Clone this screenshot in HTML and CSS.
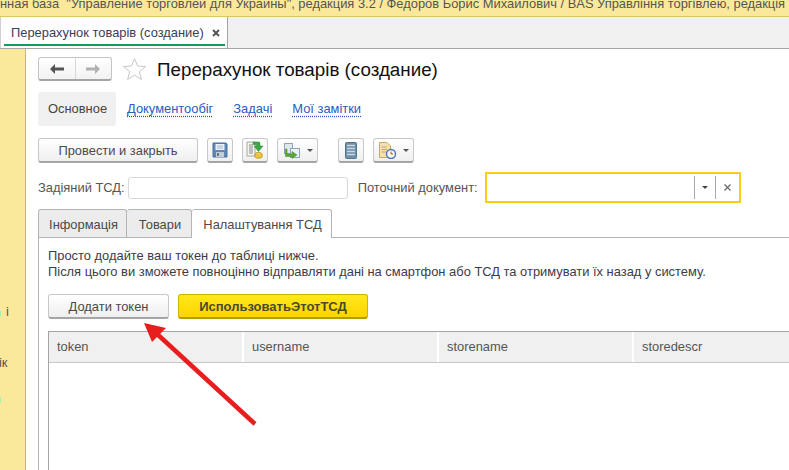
FILE: index.html
```html
<!DOCTYPE html>
<html lang="en">
<head>
  <meta charset="UTF-8" />
  <title>Перерахунок товарів (создание)</title>
  <link rel="stylesheet" href="styles.css">
</head>
<body>
  <div class="title-bar">нная база  "Управление торговлей для Украины", редакция 3.2 / Федоров Борис Михайлович / BAS Управління торгівлею, редакція 3.2</div>

  <div class="tab-bar">
    <div class="doc-tab">
      <span>Перерахунок товарів (создание)</span>
      <svg class="doc-tab-close" width="8" height="8" viewBox="0 0 8 8"><path d="M1 1 L7 7 M7 1 L1 7" stroke="#555" stroke-width="2"/></svg>
    </div>
  </div>

  <div class="main">
    <aside class="side">
      <div class="side-text side-text-1">і</div>
      <div class="side-text side-text-2">ік</div>
      <div class="side-mark side-mark-1"></div>
      <div class="side-mark side-mark-2"></div>
    </aside>

    <div class="content">
      <div class="head-row">
        <div class="nav-btns">
          <button class="nav-btn">
            <svg width="14" height="10" viewBox="0 0 14 10"><path d="M0 5 L5 0 V3.5 H14 V6.500 H5 V10 Z" fill="#555"/></svg>
          </button>
          <button class="nav-btn">
            <svg width="14" height="10" viewBox="0 0 14 10"><path d="M14 5 L9 0 V3.5 H0 V6.500 H9 V10 Z" fill="#b0b0b0"/></svg>
          </button>
        </div>
        <svg class="star" width="25" height="24" viewBox="0 0 25 24"><path d="M12.500 1.500 L15.500 9 L23.500 9.500 L17.300 14.600 L19.400 22.500 L12.500 18 L5.600 22.500 L7.700 14.600 L1.500 9.500 L9.500 9 Z" fill="#fff" stroke="#c8c8c8"/></svg>
        <h1 class="page-title">Перерахунок товарів (создание)</h1>
      </div>

      <div class="sections">
        <span class="section section-on">Основное</span>
        <a class="section" href="#">Документообіг</a>
        <a class="section" href="#">Задачі</a>
        <a class="section" href="#">Мої замітки</a>
      </div>

      <div class="toolbar">
        <button class="btn btn-post">Провести и закрыть</button>
        <button class="btn btn-icon">
          <svg width="16" height="16" viewBox="0 0 16 16">
            <path d="M1 1 H14 L15 2 V15 H1 Z" fill="#5d87b5" stroke="#47709c"/>
            <rect x="3.500" y="2" width="9" height="6" fill="#eef3f8"/>
            <path d="M5 4 H11 M5 6 H11" stroke="#9db6cf"/>
            <rect x="4" y="10" width="8" height="5" fill="#c4ccd4"/>
            <rect x="5" y="11" width="2" height="3" fill="#66788c"/>
          </svg>
        </button>
        <button class="btn btn-icon">
          <svg width="18" height="18" viewBox="0 0 18 18">
            <path d="M1 1 H9 V15 H1 Z" fill="#f4f4f0" stroke="#a8a8a0"/>
            <path d="M3 4 H7 M3 6 H7 M3 8 H7 M3 10 H7 M3 12 H7" stroke="#8a8a88"/>
            <ellipse cx="12.500" cy="13" rx="3.500" ry="1.500" fill="#f5d66a" stroke="#c09a28"/>
            <path d="M9 13 V16 C9 17.500 16 17.500 16 16 V13" fill="#f0c53e" stroke="#c09a28"/>
            <path d="M7 1 H13 Q14 1 14 2 V5 H17 L12.500 10.500 L8 5 H10.500 V3.500 H7 Z" fill="#3aa845" stroke="#2a8a36" stroke-width=".5"/>
          </svg>
        </button>
        <button class="btn btn-icon btn-drop">
          <svg width="18" height="17" viewBox="0 0 18 17">
            <rect x="1.500" y="1.500" width="8" height="10" fill="#dfe8f0" stroke="#8ea4b8"/>
            <rect x="7.500" y="6.500" width="9" height="9" fill="#eaf1f7" stroke="#8ea4b8"/>
            <path d="M4 7 V12 H9 V9.500 L14 13 L9 16.500 V14.500 H2.500 V7 Z" fill="#5aa832" stroke="#3f8a22" stroke-width=".5"/>
          </svg>
          <span class="caret"></span>
        </button>
        <button class="btn btn-icon btn-gap">
          <svg width="12" height="17" viewBox="0 0 12 17">
            <rect x=".5" y=".5" width="11" height="16" rx="1" fill="#6d8fa8" stroke="#56748a"/>
            <path d="M2 3.500 H10 M2 6.500 H10 M2 9.500 H10 M2 12.500 H10" stroke="#c9d8e3" stroke-width="1.500"/>
          </svg>
        </button>
        <button class="btn btn-icon btn-drop">
          <svg width="19" height="18" viewBox="0 0 19 18">
            <path d="M1.500 1.500 H9 L12.500 5 V16.500 H1.500 Z" fill="#f5e2a8" stroke="#c8a95c"/>
            <path d="M3.500 6 H9 M3.500 8.500 H9 M3.500 11 H8" stroke="#c4a866"/>
            <circle cx="13" cy="13" r="4.500" fill="#f7f7fa" stroke="#4a78b5" stroke-width="1.500"/>
            <path d="M13 10.500 V13 H15" stroke="#c8413a" fill="none"/>
          </svg>
          <span class="caret"></span>
        </button>
      </div>

      <div class="fields">
        <label class="field-label">Задіяний ТСД:</label>
        <div class="input input-tsd"></div>
        <label class="field-label field-label-doc">Поточний документ:</label>
        <div class="input-doc">
          <div class="input-doc-text"></div>
          <div class="input-doc-btn"><span class="caret caret-dark"></span></div>
          <div class="input-doc-btn input-doc-clear">
            <svg width="7" height="7" viewBox="0 0 7 7"><path d="M.5 .5 L6.500 6.500 M6.500 .5 L.5 6.500" stroke="#666" stroke-width="1.200"/></svg>
          </div>
        </div>
      </div>

      <div class="tabs">
        <div class="tab tab-info">Інформація</div>
        <div class="tab tab-goods">Товари</div>
        <div class="tab tab-on">Налаштування ТСД</div>
      </div>

      <div class="tab-body">
        <p class="hint">Просто додайте ваш токен до таблиці нижче.<br>Після цього ви зможете повноцінно відправляти дані на смартфон або ТСД та отримувати їх назад у систему.</p>

        <div class="actions">
          <button class="btn btn-token">Додати токен</button>
          <button class="btn btn-yellow">ИспользоватьЭтотТСД</button>
        </div>

        <div class="grid">
          <div class="grid-head">
            <div class="grid-col">token</div>
            <div class="grid-col">username</div>
            <div class="grid-col">storename</div>
            <div class="grid-col grid-col-last">storedescr</div>
          </div>
        </div>
      </div>
    </div>
  </div>

  <svg class="arrow" width="120" height="112" viewBox="0 0 120 112">
    <path d="M115 106 L16 15" stroke="#e81e1e" stroke-width="4.500" fill="none"/>
    <path d="M4 5 L26 10 L12 24 Z" fill="#e81e1e"/>
  </svg>
</body>
</html>
```

FILE: styles.css
```css
body {
  margin: 0;
  height: 470px;
  overflow: hidden;
  position: relative;
  display: flex;
  flex-direction: column;
  font-family: "Liberation Sans", Arial, sans-serif;
  font-size: 12.9px;
  color: #4a4a4a;
  background: #fff;
}
button {
  font-family: inherit;
}
.title-bar {
  flex: none;
  height: 16px;
  line-height: 7px;
  background: #fbe99b;
  border-bottom: 1px solid #d9c667;
  color: #555;
  white-space: pre;
  overflow: hidden;
}
.tab-bar {
  flex: none;
  height: 32px;
  box-sizing: border-box;
  background: #f0f0f0;
  border-bottom: 1px solid #a5a5a5;
}
.doc-tab {
  width: 228px;
  height: 31px;
  box-sizing: border-box;
  background: #fff;
  border-right: 1px solid #a5a5a5;
  border-left: 1px solid #d0d0d0;
  padding: 8px 0 0 10px;
  color: #3c3c5a;
  display: flex;
  gap: 8px;
  position: relative;
}
.doc-tab::after {
  content: "";
  position: absolute;
  left: 3px;
  right: 2px;
  bottom: 2px;
  height: 2px;
  background: #0e9d58;
}
.doc-tab-close {
  margin-top: 4px;
}
.main {
  flex: 1;
  min-height: 0;
  display: flex;
}
.side {
  width: 25px;
  flex: none;
  background: #fbe99b;
  border-right: 1px solid #c9b764;
  position: relative;
  overflow: hidden;
}
.side-text {
  position: absolute;
  color: #555;
}
.side-text-1 {
  top: 255px;
  left: 6px;
}
.side-text-2 {
  top: 306px;
  left: -1px;
}
.side-mark {
  position: absolute;
  left: 0;
  width: 1px;
  height: 6px;
  background: #aef0a8;
}
.side-mark-1 {
  top: 262px;
}
.side-mark-2 {
  top: 348px;
}
.content {
  flex: 1;
  display: flex;
  flex-direction: column;
  padding: 8px 0 0 12px;
  min-width: 0;
}
.head-row {
  flex: none;
  display: flex;
  align-items: center;
  height: 24px;
}
.nav-btns {
  display: flex;
  width: 74px;
  height: 24px;
  box-sizing: border-box;
  border: 1px solid #c4c4c4;
  border-bottom: 2px solid #a5a5a5;
  border-radius: 3px;
  background: linear-gradient(#fff, #f2f2f2);
}
.nav-btn {
  flex: 1;
  border: 0;
  background: none;
  padding: 0;
  display: flex;
  align-items: center;
  justify-content: center;
}
.nav-btn + .nav-btn {
  border-left: 1px solid #d8d8d8;
}
.star {
  margin-left: 10px;
}
.page-title {
  margin: 2px 0 0 10px;
  font-size: 18.8px;
  font-weight: normal;
  color: #111;
}
.sections {
  flex: none;
  display: flex;
  margin-top: 11px;
  height: 34px;
}
.section {
  color: #2a5bbf;
  padding: 0 10px;
  line-height: 34px;
  text-decoration: underline dotted #2a5bbf;
  text-underline-offset: 3px;
}
.section-on {
  width: 78px;
  box-sizing: border-box;
  background: #f0f0f0;
  color: #444;
  border-radius: 3px;
  margin-right: 1px;
  white-space: nowrap;
  text-decoration: none;
}
.toolbar {
  flex: none;
  display: flex;
  margin-top: 12px;
  gap: 9px;
}
.btn {
  height: 25px;
  box-sizing: border-box;
  border: 1px solid #c8c8c8;
  border-bottom: 2px solid #a5a5a5;
  border-radius: 3px;
  background: linear-gradient(#fff, #efefef);
  font-size: 12.9px;
  color: #4a4a4a;
  padding: 0;
  display: flex;
  align-items: center;
  justify-content: center;
}
.btn-post {
  width: 160px;
}
.btn-icon {
  width: 26px;
}
.btn-drop {
  width: 41px;
  gap: 6px;
}
.btn-gap {
  margin-left: 11px;
}
.caret {
  width: 0;
  height: 0;
  border-left: 3px solid transparent;
  border-right: 3px solid transparent;
  border-top: 3px solid #555;
}
.fields {
  flex: none;
  display: flex;
  align-items: center;
  margin-top: 9px;
  height: 31px;
}
.field-label {
  color: #555;
  white-space: nowrap;
}
.input {
  box-sizing: border-box;
  height: 22px;
  border: 1px solid #d8d8d8;
  border-radius: 3px;
}
.input-tsd {
  width: 220px;
  margin-left: 3px;
}
.field-label-doc {
  margin-left: 10px;
}
.input-doc {
  width: 256px;
  height: 31px;
  box-sizing: border-box;
  border: 2px solid #fbcb17;
  margin-left: 7px;
  display: flex;
  padding: 2px 0;
}
.input-doc-text {
  flex: 1;
}
.input-doc-btn {
  width: 20px;
  border-left: 1px solid #aaa;
  display: flex;
  align-items: center;
  justify-content: center;
}
.input-doc-clear {
  width: 23px;
}
.caret-dark {
  border-top-color: #444;
}
.tabs {
  flex: none;
  display: flex;
  margin-top: 6px;
  height: 28px;
}
.tab {
  box-sizing: border-box;
  height: 28px;
  padding: 7px 0 0 2px;
  text-align: center;
  background: #ececec;
  border: 1px solid #b4b4b4;
  border-bottom: 0;
  border-radius: 3px 3px 0 0;
  white-space: nowrap;
}
.tab + .tab {
  border-left: 0;
}
.tab-info {
  width: 89px;
}
.tab-goods {
  width: 65px;
}
.tab-on {
  width: 140px;
  background: #fff;
  position: relative;
  z-index: 1;
  height: 29px;
}
.tab-body {
  flex: 1;
  min-height: 0;
  display: flex;
  flex-direction: column;
  border-top: 1px solid #b4b4b4;
  border-left: 1px solid #b4b4b4;
  padding: 10px 0 0 9px;
}
.hint {
  margin: 0;
  line-height: 16px;
  color: #3c3c46;
}
.actions {
  flex: none;
  display: flex;
  margin-top: 14px;
  gap: 9px;
}
.btn-token {
  width: 121px;
}
.btn-yellow {
  width: 190px;
  background: linear-gradient(#ffe81a, #fdd400);
  border-color: #d4b000;
  border-bottom-color: #b89a00;
  font-weight: bold;
  font-size: 13px;
  color: #4a4a2a;
}
.grid {
  flex: 1;
  min-height: 0;
  margin-top: 12px;
  border-top: 1px solid #a5a5a5;
  border-left: 1px solid #a5a5a5;
}
.grid-head {
  display: flex;
  height: 30px;
  background: #f0f0f0;
  border-bottom: 1px solid #c8c8c8;
  line-height: 30px;
  color: #555;
}
.grid-col {
  width: 195px;
  flex: none;
  padding-left: 8px;
  box-sizing: border-box;
  border-right: 2px solid #fff;
}
.grid-col-last {
  flex: 1;
  border-right: 0;
}
.arrow {
  position: absolute;
  left: 140px;
  top: 318px;
}
```
